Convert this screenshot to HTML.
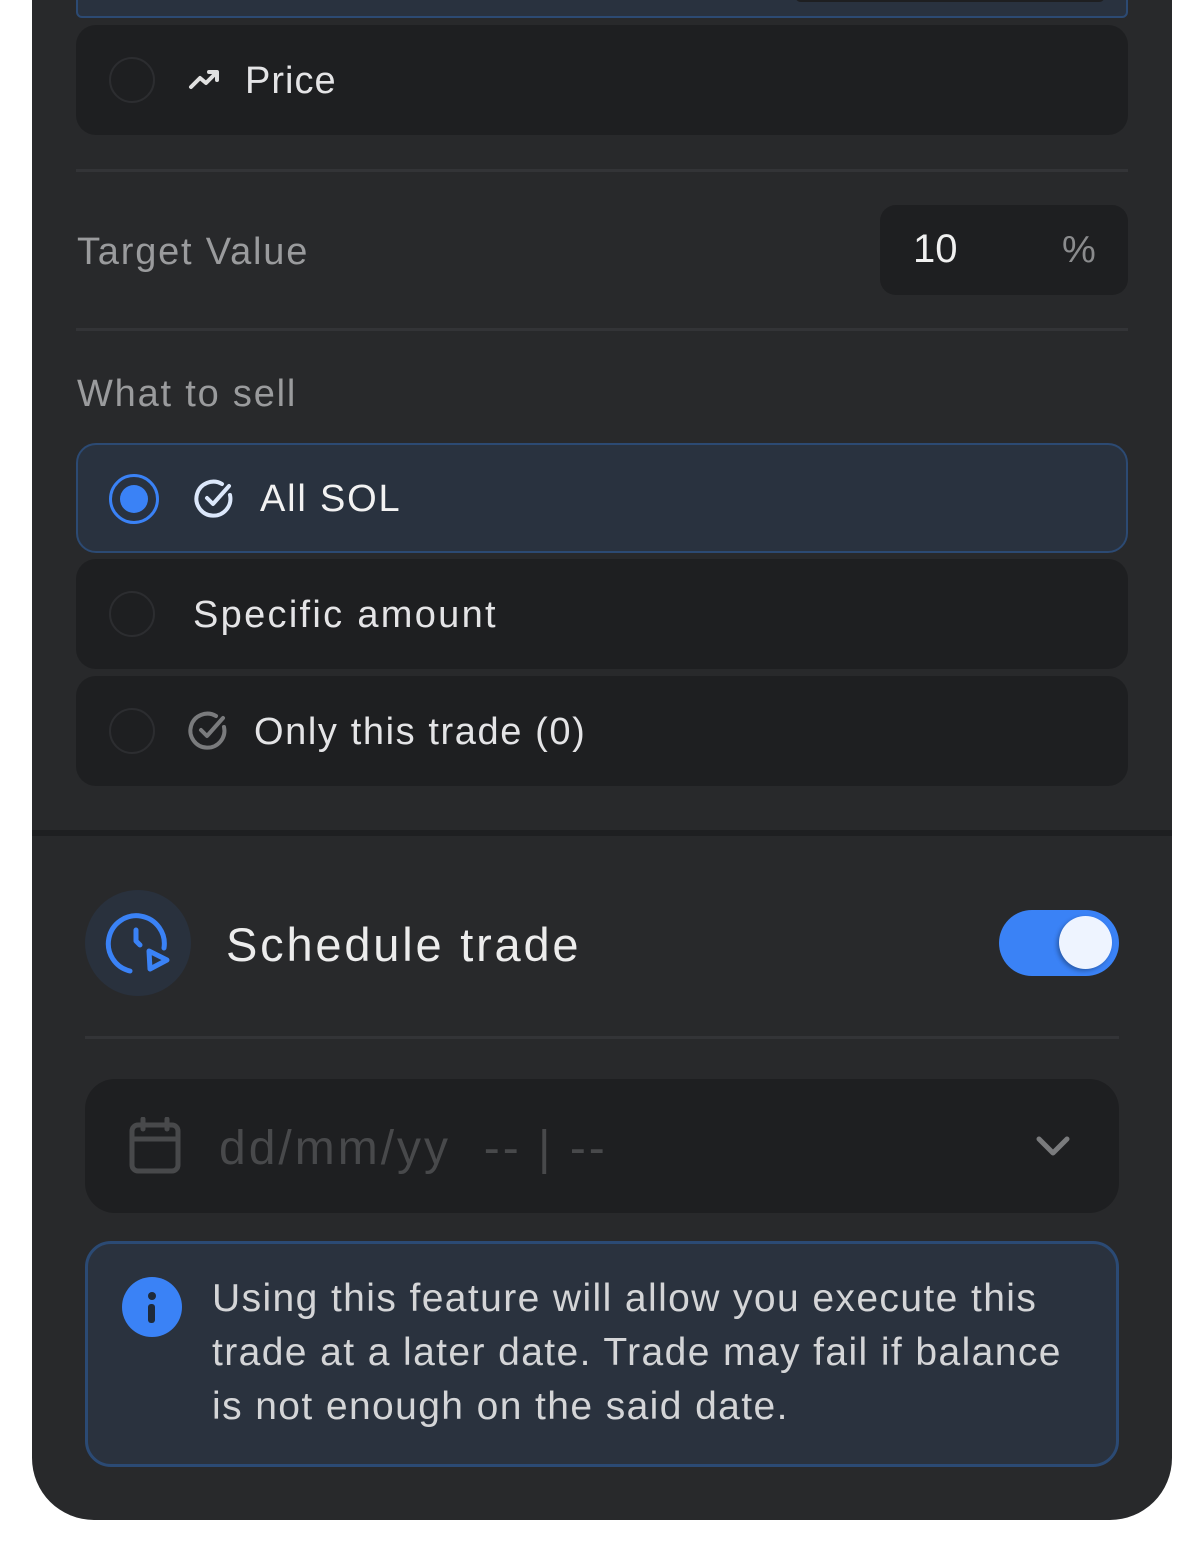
<!DOCTYPE html>
<html><head><style>
body{margin:0;width:1204px;height:1552px;background:#fff;font-family:"Liberation Sans",sans-serif;position:relative;overflow:hidden}
.a{position:absolute}
.card{position:absolute;left:76px;width:1052px;background:#1e1f21;border-radius:20px}
.radio{position:absolute;left:33px;width:46px;height:46px;border-radius:50%;border:2px solid #2c2d30;box-sizing:border-box}
.t{position:absolute;color:#e4e4e6;font-size:38px;white-space:nowrap;letter-spacing:1.8px}
.div{position:absolute;height:3px;background:#333437}
</style></head><body>
<div class="a" style="left:32px;top:0;width:1140px;height:1520px;background:#28292b;border-radius:0 0 62px 62px"></div>
<div class="a" style="left:32px;top:830px;width:1140px;height:6px;background:#1e1f21"></div>
<div class="a" style="left:76px;top:-20px;width:1052px;height:38px;background:#29323f;border:2px solid #2c4a73;box-sizing:border-box;border-radius:0 0 6px 6px"></div>
<div class="a" style="left:795px;top:-10px;width:310px;height:12px;background:#1e1f21;border-radius:8px"></div>
<div class="card" style="top:25px;height:110px">
 <div class="radio" style="top:32px"></div>
 <svg class="a" style="left:112px;top:42px" width="34" height="26" viewBox="0 0 34 26"><path d="M3 20 L12 11 L18 16 L28 6 M21 5 H29 V13" fill="none" stroke="#e0e0e0" stroke-width="4" stroke-linecap="round" stroke-linejoin="round"/></svg>
 <div class="t" style="left:169px;top:35px;letter-spacing:1px">Price</div>
</div>
<div class="div" style="left:76px;top:169px;width:1052px"></div>
<div class="t" style="left:77px;top:231px;color:#9a9b9d">Target Value</div>
<div class="a" style="left:880px;top:205px;width:248px;height:90px;background:#1e1f21;border-radius:16px"></div>
<div class="t" style="left:913px;top:227px;font-size:40px;color:#f0f0f0;letter-spacing:0">10</div>
<div class="t" style="left:1062px;top:229px;color:#8a8b8d;letter-spacing:0">%</div>
<div class="div" style="left:76px;top:328px;width:1052px"></div>
<div class="t" style="left:77px;top:373px;color:#9a9b9d">What to sell</div>
<div class="card" style="top:443px;height:110px;background:#29323f;border:2px solid #2c4a73;box-sizing:border-box">
 <div class="a" style="left:31px;top:29px;width:50px;height:50px;border-radius:50%;border:3px solid #3a82f6;box-sizing:border-box"></div>
 <div class="a" style="left:42px;top:40px;width:28px;height:28px;border-radius:50%;background:#3a82f6"></div>
 <svg class="a" style="left:114px;top:31px" width="46" height="46" viewBox="0 0 46 46"><path d="M38 19 A17 17 0 1 1 30 8" fill="none" stroke="#dce8fb" stroke-width="4" stroke-linecap="round"/><path d="M15 22 L21 28 L37 10" fill="none" stroke="#dce8fb" stroke-width="4" stroke-linecap="round" stroke-linejoin="round"/></svg>
 <div class="t" style="left:182px;top:33px;color:#f2f2f2">All SOL</div>
</div>
<div class="card" style="top:559px;height:110px">
 <div class="radio" style="top:32px"></div>
 <div class="t" style="left:117px;top:35px;letter-spacing:2.3px">Specific amount</div>
</div>
<div class="card" style="top:676px;height:110px">
 <div class="radio" style="top:32px"></div>
 <svg class="a" style="left:110px;top:32px" width="46" height="46" viewBox="0 0 46 46"><path d="M38 19 A17 17 0 1 1 30 8" fill="none" stroke="#7a7b7d" stroke-width="4" stroke-linecap="round"/><path d="M15 22 L21 28 L37 10" fill="none" stroke="#7a7b7d" stroke-width="4" stroke-linecap="round" stroke-linejoin="round"/></svg>
 <div class="t" style="left:178px;top:35px;letter-spacing:1.6px">Only this trade (0)</div>
</div>
<div class="a" style="left:85px;top:890px;width:106px;height:106px;border-radius:50%;background:#29313d"></div>
<svg class="a" style="left:105px;top:910px" width="66" height="66" viewBox="0 0 66 66"><path d="M25 61 A28 28 0 1 1 59 38" fill="none" stroke="#3a82f6" stroke-width="5" stroke-linecap="round"/><path d="M31 20 V31 L35 35" fill="none" stroke="#3a82f6" stroke-width="5" stroke-linecap="round" stroke-linejoin="round"/><path d="M44 41 L62 50 L45 59 Z" fill="none" stroke="#3a82f6" stroke-width="5" stroke-linejoin="round"/></svg>
<div class="t" style="left:226px;top:917px;font-size:47px;color:#ececec;letter-spacing:2.8px">Schedule trade</div>
<div class="a" style="left:999px;top:910px;width:120px;height:66px;border-radius:33px;background:#3a82f6"></div>
<div class="a" style="left:1059px;top:916px;width:53px;height:53px;border-radius:50%;background:#eef4ff;box-shadow:-2px 2px 4px rgba(0,0,0,.3)"></div>
<div class="div" style="left:85px;top:1036px;width:1034px"></div>
<div class="a" style="left:85px;top:1079px;width:1034px;height:134px;background:#1e1f21;border-radius:30px"></div>
<svg class="a" style="left:128px;top:1117px" width="54" height="58" viewBox="0 0 54 58"><rect x="4" y="8" width="46" height="46" rx="6" fill="none" stroke="#48494b" stroke-width="5"/><path d="M4 22 H50 M15 2 V12 M39 2 V12" stroke="#48494b" stroke-width="5" stroke-linecap="round"/></svg>
<div class="t" style="left:219px;top:1121px;font-size:48px;color:#48494b;letter-spacing:3px">dd/mm/yy &nbsp;-- | --</div>
<svg class="a" style="left:1035px;top:1135px" width="36" height="24" viewBox="0 0 36 24"><path d="M4 4 L18 18 L32 4" fill="none" stroke="#7a7b7d" stroke-width="5" stroke-linecap="round" stroke-linejoin="round"/></svg>
<div class="a" style="left:85px;top:1241px;width:1034px;height:226px;background:#2a323e;border:3px solid #2b4a74;box-sizing:border-box;border-radius:26px"></div>
<div class="a" style="left:122px;top:1277px;width:60px;height:60px;border-radius:50%;background:#3a82f6"></div>
<div class="a" style="left:148px;top:1292px;width:8px;height:8px;border-radius:50%;background:#1e2a3a"></div>
<div class="a" style="left:148px;top:1304px;width:7px;height:19px;border-radius:3px;background:#1e2a3a"></div>
<div class="t" style="left:212px;top:1272px;font-size:39px;line-height:54px;color:#d4d5d7;letter-spacing:1.4px">Using this feature will allow you execute this<br>trade at a later date. Trade may fail if balance<br>is not enough on the said date.</div>
</body></html>
